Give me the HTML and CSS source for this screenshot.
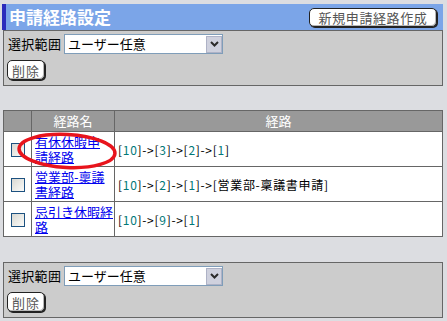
FILE: index.html
```html
<!DOCTYPE html>
<html lang="ja">
<head>
    <meta charset="UTF-8">
    <title>申請経路設定</title>
    <link rel="stylesheet" href="styles.css">
</head>
<body>
    <div class="page">
        <div class="titlebar">
            <h1>申請経路設定</h1>
            <button class="btn btn-new">新規申請経路作成</button>
        </div>

        <div class="panel">
            <div class="range">
                <span class="range-label">選択範囲</span>
                <div class="select">
                    <span class="select-text">ユーザー任意</span>
                    <span class="select-arrow">
                        <svg width="9" height="6" viewBox="0 0 9 6"><polyline points="1,1 4.5,4.5 8,1" fill="none" stroke="#2b2b2b" stroke-width="2"/></svg>
                    </span>
                </div>
            </div>
            <button class="btn btn-del">削除</button>
        </div>

        <div class="table-wrap">
            <table class="routes">
                <thead>
                    <tr>
                        <th class="col-check"></th>
                        <th class="col-name">経路名</th>
                        <th>経路</th>
                    </tr>
                </thead>
                <tbody>
                    <tr>
                        <td class="col-check"><span class="check"></span></td>
                        <td class="col-name"><a href="#" class="name-short">有休休暇申請経路</a></td>
                        <td class="route">[<b>10</b>]-&gt;[<b>3</b>]-&gt;[<b>2</b>]-&gt;[<b>1</b>]</td>
                    </tr>
                    <tr>
                        <td class="col-check"><span class="check"></span></td>
                        <td class="col-name"><a href="#">営業部-稟議書経路</a></td>
                        <td class="route">[<b>10</b>]-&gt;[<b>2</b>]-&gt;[<b>1</b>]-&gt;[営業部-稟議書申請]</td>
                    </tr>
                    <tr>
                        <td class="col-check"><span class="check"></span></td>
                        <td class="col-name"><a href="#">忌引き休暇経路</a></td>
                        <td class="route">[<b>10</b>]-&gt;[<b>9</b>]-&gt;[<b>1</b>]</td>
                    </tr>
                </tbody>
            </table>
            <!-- hand-drawn annotation circle -->
            <svg class="mark" width="110" height="44" viewBox="0 0 110 44">
                <ellipse cx="53" cy="22" rx="48" ry="16.5" transform="rotate(3 53 22)" fill="none" stroke="#e8141c" stroke-width="3.5"/>
            </svg>
        </div>

        <div class="panel panel-bottom">
            <div class="range">
                <span class="range-label">選択範囲</span>
                <div class="select">
                    <span class="select-text">ユーザー任意</span>
                    <span class="select-arrow">
                        <svg width="9" height="6" viewBox="0 0 9 6"><polyline points="1,1 4.5,4.5 8,1" fill="none" stroke="#2b2b2b" stroke-width="2"/></svg>
                    </span>
                </div>
            </div>
            <button class="btn btn-del">削除</button>
        </div>
    </div>
</body>
</html>
```

FILE: styles.css
```css
body {
    margin: 0;
    padding: 0;
    background: #dcdde1;
    font-family: "Noto Sans CJK JP", "Noto Sans", sans-serif;
    font-size: 13px;
    color: #000;
}

.page {
    width: 441px;
    margin-left: 2px;
    padding-top: 4px;
}

.titlebar {
    height: 26px;
    display: flex;
    align-items: center;
    justify-content: space-between;
    background: #7ba5e8;
    border-left: 4px solid #2c2cbc;
    padding: 0 6px 0 3px;
}

.titlebar h1 {
    margin: 0;
    font-size: 17px;
    font-weight: 700;
    line-height: 20px;
    color: #fff;
}

.btn {
    font-family: "Noto Sans CJK JP", "Noto Sans", sans-serif;
    font-size: 13px;
    line-height: 15px;
    color: #555;
    background: #fff;
    border: 1px solid #222;
    border-radius: 5px;
    box-shadow: inset -1px -1px 0 #b8b8b8, 1px 1px 0 #222;
    padding: 0;
    cursor: pointer;
}

.btn-new {
    width: 128px;
    height: 19px;
    letter-spacing: 0.6px;
}

.btn-del {
    width: 38px;
    height: 20px;
    margin: 6px 0 0 -1px;
    display: block;
    letter-spacing: 1px;
}

.panel {
    margin-left: 1px;
    box-sizing: content-box;
    background: #cccccc;
    border: 1px solid #666;
    padding: 3px 4px 4px 4px;
    height: 47px;
}

.range {
    display: flex;
    align-items: center;
    height: 20px;
}

.range-label {
    width: 56px;
    line-height: 16px;
    letter-spacing: 0.3px;
}

.select {
    width: 157px;
    height: 18px;
    display: flex;
    align-items: center;
    background: #fff;
    border: 1px solid #7f9db9;
}

.select-text {
    flex: 1;
    padding-left: 3px;
    line-height: 16px;
}

.select-arrow {
    width: 16px;
    height: 17px;
    display: flex;
    align-items: center;
    justify-content: center;
    background: #cfd1de;
    border: 1px solid #aeb2c6;
    box-sizing: border-box;
}

.table-wrap {
    position: relative;
    margin: 24px 0 0 1px;
}

.routes {
    width: 440px;
    border-collapse: collapse;
    background: #fff;
    border: 1px solid #666;
}

.routes th {
    height: 20px;
    padding: 0;
    background: #999;
    color: #fff;
    font-weight: 400;
    border: 1px solid #666;
    line-height: 16px;
}

.routes td {
    height: 34px;
    padding: 0 3px;
    border: 1px solid #666;
    line-height: 15px;
}

.routes .col-check {
    width: 27px;
    padding: 0;
    text-align: center;
}

.routes .col-name {
    width: 79px;
    padding-right: 0;
}

.routes th.col-name {
    text-align: center;
}

.routes a {
    color: #0000ee;
}

.routes a.name-short {
    display: inline-block;
    width: 66px;
}

.routes .route {
    font-size: 12px;
    letter-spacing: 0.7px;
}

.route b {
    font-weight: 400;
    color: #007878;
}

.check {
    display: inline-block;
    width: 12px;
    height: 12px;
    vertical-align: middle;
    border: 1px solid #1c5180;
    background: linear-gradient(135deg, #d8d8d2, #fbfbf9);
}

.mark {
    position: absolute;
    left: 11px;
    top: 19px;
    pointer-events: none;
}

.panel-bottom {
    margin-top: 25px;
}
```
